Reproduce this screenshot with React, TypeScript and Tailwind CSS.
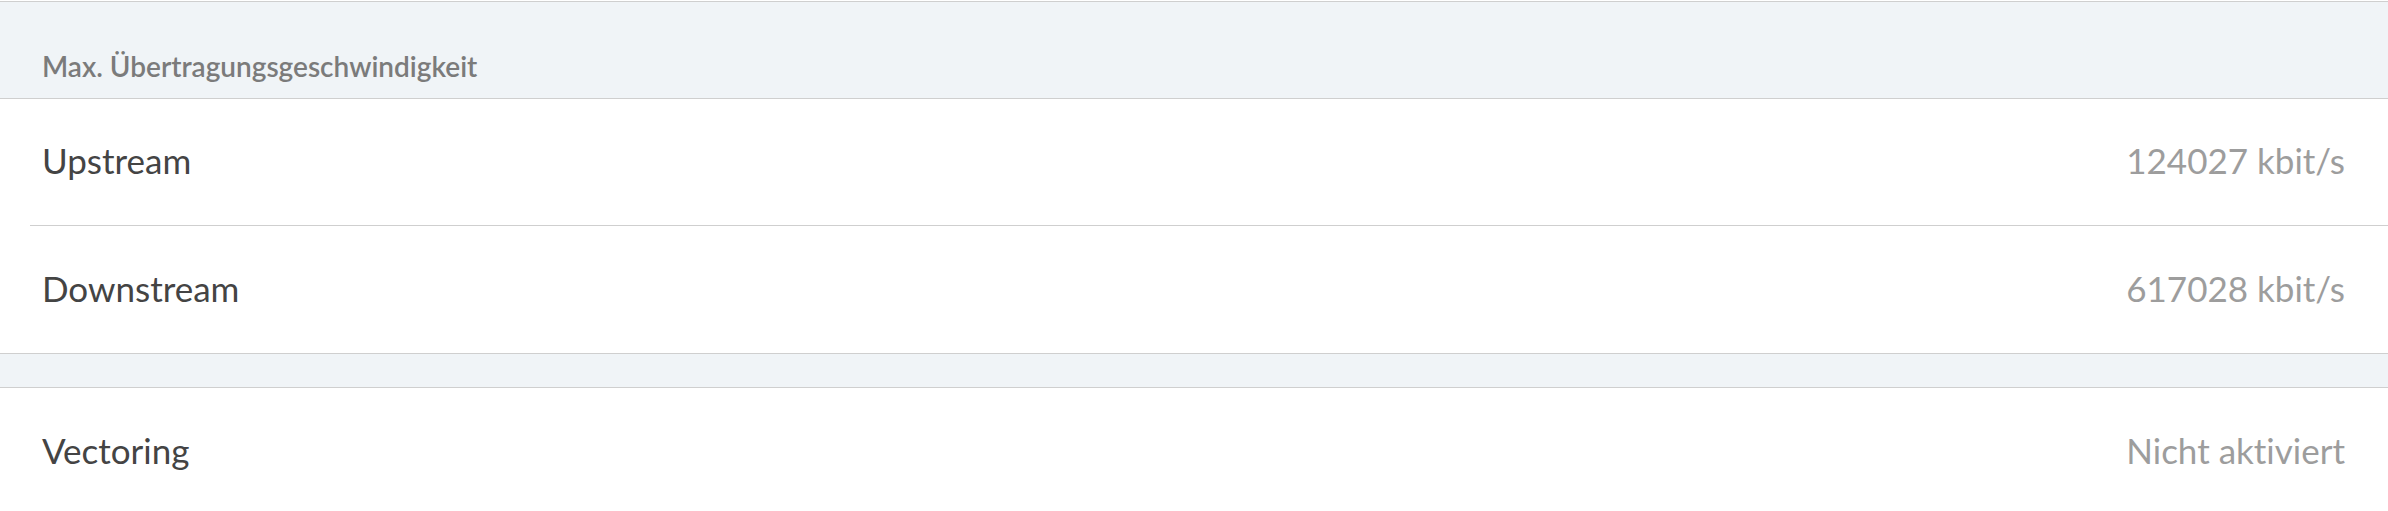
const font = { fontFamily: "Lato, 'Open Sans', sans-serif" };

function Row({ label, value, divider }: { label: string; value: string; divider?: boolean }) {
  return (
    <div className={divider ? "ml-[30px] border-b border-[#cfcfcf]" : ""}>
      <div
        className={`flex items-center justify-between pr-[43px] pb-[3px] ${
          divider ? "h-[126px] pl-[12px]" : "h-[127px] pl-[42px]"
        }`}
      >
        <span className="text-[35px] text-[#444444]">{label}</span>
        <span className="text-[35px] text-[#9d9d9d]">{value}</span>
      </div>
    </div>
  );
}

export default function App() {
  return (
    <div className="min-h-screen bg-white pt-px [font-variant-ligatures:none]" style={font}>
      {/* Abschnitt: Übertragungsgeschwindigkeit */}
      <div className="flex h-[98px] items-end border-y border-[#cfcfcf] bg-[#f0f4f7] px-[42px] pb-[11px]">
        <p className="text-[28px] font-semibold text-[#7b7b7b]">Max. Übertragungsgeschwindigkeit</p>
      </div>
      <Row label="Upstream" value="124027 kbit/s" divider />
      <Row label="Downstream" value="617028 kbit/s" />

      <div className="h-[35px] border-y border-[#cfcfcf] bg-[#f0f4f7]" />

      <Row label="Vectoring" value="Nicht aktiviert" />
    </div>
  );
}
